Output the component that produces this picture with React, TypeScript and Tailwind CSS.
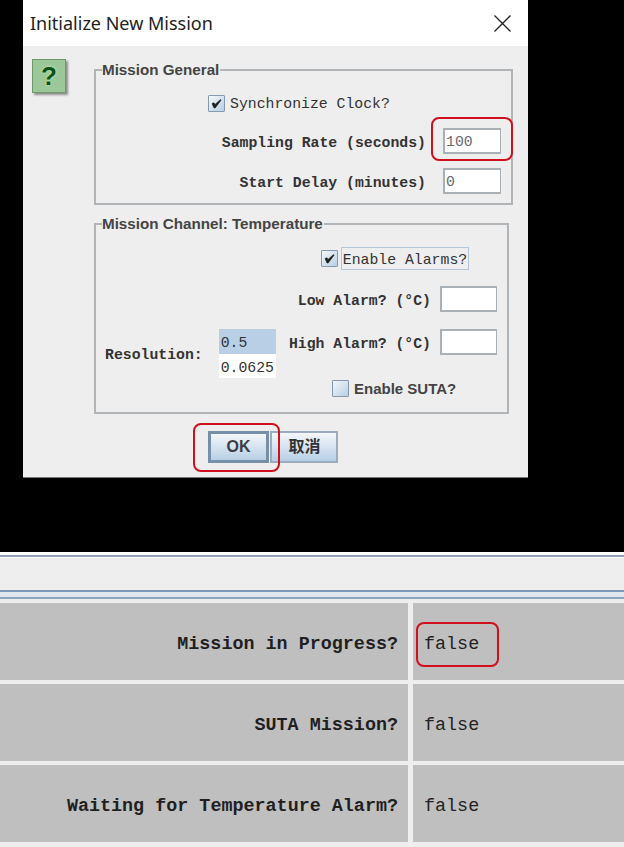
function Check({ checked = true }: { checked?: boolean }) {
  return (
    <span className="flex h-[17px] w-[17px] shrink-0 items-center justify-center rounded-[1px] border border-[#8499ad] bg-gradient-to-br from-[#f4f8fb] to-[#b9cfe4]">
      {checked && (
        <svg width="11" height="11" viewBox="0 0 11 11">
          <path d="M1 5.5 L3 4.8 L4 6.5 L9.5 1.5 L10 2.2 L4.2 10 L3 10 Z" fill="#1c1c1c" stroke="#1c1c1c" strokeWidth="0.6" strokeLinejoin="round" />
        </svg>
      )}
    </span>
  );
}

function Field({ value = "", w = "w-[58px]" }: { value?: string; w?: string }) {
  return (
    <div className={`${w} flex h-[26px] shrink-0 items-center border-2 border-r border-[#a9b0b6] bg-white pl-[1px] pt-[3px] font-['Liberation_Mono',monospace] text-[14.8px] leading-none text-[#6a6a72]`}>
      {value}
    </div>
  );
}

function Label({ children, className = "" }: { children: React.ReactNode; className?: string }) {
  return (
    <span className={`whitespace-nowrap font-['Liberation_Mono',monospace] text-[14.8px] font-bold leading-5 text-[#333] ${className}`}>
      {children}
    </span>
  );
}

function Row({ label, value, last }: { label: string; value: string; last?: boolean }) {
  return (
    <div className={`flex h-[77px] gap-[5px] ${last ? "" : "mb-[4px]"}`}>
      <div className="flex w-[408px] items-center justify-end bg-[#bfbfbf] pr-[10px] pt-[6px] font-['Liberation_Mono',monospace] text-[18.4px] font-bold text-[#1f1f1f]">
        {label}
      </div>
      <div className="flex flex-1 items-center bg-[#bfbfbf] pl-[11px] pt-[6px] font-['Liberation_Mono',monospace] text-[18.4px] text-[#222]">
        {value}
      </div>
    </div>
  );
}

const legendCls =
  "ml-[6px] h-[16px] pr-[1px] font-['Liberation_Sans',sans-serif] text-[15.2px] font-bold leading-4 text-[#444]";

export default function App() {
  return (
    <div className="relative h-[847px] w-[624px] overflow-hidden bg-black">
      <div className="ml-[23px] h-[478px] w-[505px] border-b border-[#777] bg-[#eeeeee]">
        <div className="flex h-[46px] items-center justify-between bg-white pl-[7px] pr-[17px]">
          <span className="font-['Noto_Sans',sans-serif] text-[18px] text-[#222]">Initialize New Mission</span>
          <svg width="17" height="17" viewBox="0 0 17 17">
            <path d="M0.5 0.5 L16.5 16.5 M16.5 0.5 L0.5 16.5" stroke="#222" strokeWidth="1.3" fill="none" />
          </svg>
        </div>
        <div className="flex">
          <div className="ml-[9px] mr-[28px] mt-[13px] flex h-[34px] w-[34px] items-center justify-center border border-[#6d9a6c] bg-[#9cc899] font-['Liberation_Sans',sans-serif] text-[26px] font-bold text-[#0c5210] shadow-[2px_2px_2px_rgba(0,0,0,0.4)] [text-shadow:0_0_2px_#dff5d8]">
            ?
          </div>
          <div className="mt-[16px]">
            <fieldset className="h-[143px] w-[419px] border-2 border-[#b2b5b7]">
              <legend className={legendCls}>Mission General</legend>
              <div className="ml-[112px] mt-[17px] flex h-[17px] items-center gap-[5px]">
                <Check />
                <Label className="font-normal">Synchronize Clock?</Label>
              </div>
              <div className="mr-[10px] mt-[16px] flex items-center justify-end gap-[17px]">
                <Label className="pt-[4px]">Sampling Rate (seconds)</Label>
                <Field value="100" />
              </div>
              <div className="mr-[10px] mt-[14px] flex items-center justify-end gap-[17px]">
                <Label className="pt-[4px]">Start Delay (minutes)</Label>
                <Field value="0" />
              </div>
            </fieldset>
            <fieldset className="mt-[11px] h-[198px] w-[415px] border-2 border-[#b2b5b7]">
              <legend className={legendCls}>Mission Channel: Temperature</legend>
              <div className="mr-[38px] mt-[15px] flex items-center justify-end gap-[3px]">
                <Check />
                <span className="flex h-[23px] w-[128px] items-center justify-center border border-[#b4c6d8] pt-[2px]">
                  <Label className="font-normal">Enable Alarms?</Label>
                </span>
              </div>
              <div className="mr-[10px] mt-[16px] flex items-center justify-end gap-[9px]">
                <Label className="pt-[4px]">Low Alarm? (°C)</Label>
                <Field w="w-[57px]" />
              </div>
              <div className="mt-[17px] flex items-start justify-between pl-[9px] pr-[10px]">
                <Label className="mt-[16px]">Resolution:</Label>
                <div className="ml-[16px] w-[57px] font-['Liberation_Mono',monospace] text-[14.8px] text-[#333]">
                  <div className="flex h-[25px] items-center bg-[#b8cfe5] pl-[2px] pt-[4px]">0.5</div>
                  <div className="flex h-[24px] items-center bg-white pl-[2px] pt-[4px]">0.0625</div>
                </div>
                <div className="ml-auto flex items-center gap-[9px]">
                  <Label className="pt-[4px]">High Alarm? (°C)</Label>
                  <Field w="w-[57px]" />
                </div>
              </div>
              <div className="ml-[236px] mt-[2px] flex items-center gap-[5px]">
                <Check checked={false} />
                <span className="font-['Liberation_Sans',sans-serif] text-[15px] font-bold leading-[17px] text-[#444]">Enable SUTA?</span>
              </div>
            </fieldset>
            <div className="ml-[114px] mt-[17px] flex gap-[1px]">
              <button className="flex h-[32px] w-[61px] items-center justify-center border-[3px] border-[#7790a9] bg-gradient-to-b from-[#f4f7fb] to-[#b8cfe5] font-['Liberation_Sans',sans-serif] text-[16px] font-bold text-[#3a3f45]">
                OK
              </button>
              <button className="flex h-[32px] w-[68px] items-center justify-center border-2 border-[#9aacbe] bg-gradient-to-b from-[#f4f7fb] to-[#b8cfe5] pl-[1px] font-['Liberation_Sans','Noto_Sans_CJK_SC',sans-serif] text-[16px] font-bold text-[#333]">
                取消
              </button>
            </div>
          </div>
        </div>
      </div>

      <div className="mt-[74px] h-[295px] bg-[#eeeeee]">
        <div className="h-[3px] bg-white" />
        <div className="h-[2px] bg-[#93a4b5]" />
        <div className="h-[1px] bg-white" />
        <div className="h-[32px]" />
        <div className="h-[2px] bg-[#7f97b8]" />
        <div className="h-[5px] bg-[#dfe6ee]" />
        <div className="h-[2px] bg-[#8ea4bd]" />
        <div className="h-[4px]" />
        <Row label="Mission in Progress?" value="false" />
        <Row label="SUTA Mission?" value="false" />
        <Row label="Waiting for Temperature Alarm?" value="false" last />
      </div>

      <div className="absolute left-[431px] top-[117px] h-[44px] w-[82px] rounded-[8px] border-2 border-[#d0101c]" />
      <div className="absolute left-[193px] top-[423px] h-[49px] w-[87px] rounded-[8px] border-2 border-[#d0101c]" />
      <div className="absolute left-[416px] top-[622px] h-[45px] w-[83px] rounded-[8px] border-2 border-[#d0101c]" />
    </div>
  );
}
